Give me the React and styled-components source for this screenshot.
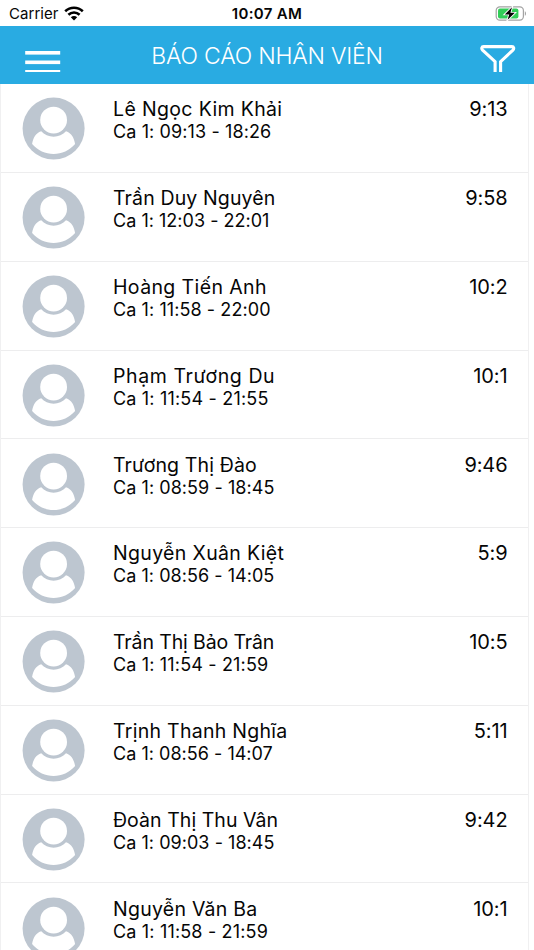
import React from "react";
import styled, { createGlobalStyle } from "styled-components";

const GlobalStyle = createGlobalStyle`
  * { box-sizing: border-box; }
  html, body { margin: 0; background: #fff; }
  body { font-family: Inter, "Liberation Sans", sans-serif; color: #060606; }
`;

const Screen = styled.div`
  width: 534px;
  height: 950px;
  overflow: hidden;
  display: flex;
  flex-direction: column;
`;

const StatusBar = styled.header`
  flex: none;
  height: 26px;
  padding: 1px 7px 0 9px;
  display: grid;
  grid-template-columns: 1fr auto 1fr;
  align-items: center;
  font-size: 15px;
  line-height: 24px;
`;

const Carrier = styled.div`
  display: flex;
  align-items: center;
  gap: 5px;
  letter-spacing: 0.05px;
`;

const WifiIcon = styled.svg`
  display: block;
  margin-bottom: 1px;
`;

const Clock = styled.div`
  font-weight: 600;
  letter-spacing: 0.35px;
  margin-right: 2px;
`;

const BatteryIcon = styled.svg`
  justify-self: end;
  display: block;
`;

const NavBar = styled.nav`
  flex: none;
  height: 58px;
  padding: 0 18px 0 25px;
  display: grid;
  grid-template-columns: 36px 1fr 36px;
  background: #29abe2;
  color: #fff;
`;

const Title = styled.h1`
  margin: 0;
  padding: 15px 7px 0 0;
  text-align: center;
  font-size: 23px;
  line-height: 30px;
  font-weight: 350;
  letter-spacing: -0.22px;
  white-space: nowrap;
`;

const NavIcon = styled.svg`
  display: block;
  margin-top: ${(p) => p.$top}px;
`;

const List = styled.ul`
  flex: none;
  width: 529px;
  margin: 0;
  padding: 0.3px 0 0;
  list-style: none;
  border: solid #f0f0f1;
  border-width: 0 1px;
`;

const Row = styled.li`
  height: 88.8px;
  padding: 13.1px 20.5px 0 21px;
  display: flex;
  border-bottom: 1px solid #ededee;
`;

const Avatar = styled.svg`
  flex: none;
  width: 63px;
  height: 63px;
  margin-right: 28px;
`;

const Details = styled.div`
  flex: 1;
  white-space: nowrap;
`;

const Name = styled.div`
  font-size: 19.5px;
  line-height: 24px;
  letter-spacing: ${(p) => p.$track}px;
`;

const Shift = styled.div`
  font-size: 18px;
  line-height: 21px;
  letter-spacing: ${(p) => p.$track}px;
`;

const Hours = styled.div`
  font-size: 20px;
  line-height: 24px;
  letter-spacing: -0.1px;
`;

const employees = [
  { name: "Lê Ngọc Kim Khải", from: "09:13", to: "18:26", hours: "9:13", nt: 0.35, st: 0.11 },
  { name: "Trần Duy Nguyên", from: "12:03", to: "22:01", hours: "9:58", nt: 0.13, st: 0.02 },
  { name: "Hoàng Tiến Anh", from: "11:58", to: "22:00", hours: "10:2", nt: 0.38, st: 0.08 },
  { name: "Phạm Trương Du", from: "11:54", to: "21:55", hours: "10:1", nt: 0.59, st: 0.18 },
  { name: "Trương Thị Đào", from: "08:59", to: "18:45", hours: "9:46", nt: 0.14, st: 0.06 },
  { name: "Nguyễn Xuân Kiệt", from: "08:56", to: "14:05", hours: "5:9", nt: 0.34, st: 0.04 },
  { name: "Trần Thị Bảo Trân", from: "11:54", to: "21:59", hours: "10:5", nt: -0.12, st: 0.16 },
  { name: "Trịnh Thanh Nghĩa", from: "08:56", to: "14:07", hours: "5:11", nt: 0.28, st: 0.02 },
  { name: "Đoàn Thị Thu Vân", from: "09:03", to: "18:45", hours: "9:42", nt: 0.05, st: 0.04 },
  { name: "Nguyễn Văn Ba", from: "11:58", to: "21:59", hours: "10:1", nt: 0.25, st: 0.17 },
];

function Wifi() {
  return (
    <WifiIcon width="20" height="15" viewBox="0 0 20 15" fill="none" stroke="#000" strokeWidth="2.6">
      <path d="M1.2 5.3C6.2 0.6 13.8 0.6 18.8 5.3" />
      <path d="M4.4 8.7C7.6 5.7 12.4 5.7 15.6 8.7" />
      <path d="M10 14.4L6.8 11.2C8.6 9.6 11.4 9.6 13.2 11.2Z" fill="#000" stroke="none" />
    </WifiIcon>
  );
}

function Battery() {
  return (
    <BatteryIcon width="32" height="16" viewBox="0 0 32 16">
      <rect x="1.2" y="0.8" width="27.2" height="13.4" rx="3.6" fill="#fff" stroke="#a3a3a3" strokeWidth="1.2" />
      <path d="M29.8 5.2C31.4 5.8 31.4 9.2 29.8 9.8Z" fill="#a3a3a3" />
      <rect x="3" y="2.6" width="20.4" height="9.8" rx="2" fill="#32cd58" />
      <path d="M17 1.3L9.8 8.4H14.2L12.6 13.8L19.8 6.8H15.4Z" fill="#000" stroke="#fff" strokeWidth="1.8" paintOrder="stroke" />
    </BatteryIcon>
  );
}

function Person() {
  return (
    <Avatar viewBox="-0.6 -0.6 63 63">
      <circle cx="31" cy="31" r="31" fill="#bdc6d0" />
      <circle cx="31" cy="22.5" r="13.4" fill="#fff" />
      <path d="M18.6 33.7C24.5 40.8 37.5 40.8 43.4 33.7C49 35.6 51.5 40.5 52.5 46.5C46.8 53.2 39.2 56.4 31 56.4C22.8 56.4 15.2 53.2 9.5 46.5C10.5 40.5 13 35.6 18.6 33.7Z" fill="#fff" />
    </Avatar>
  );
}

export default function App() {
  return (
    <>
      <GlobalStyle />
      <Screen>
        <StatusBar>
          <Carrier>
            Carrier
            <Wifi />
          </Carrier>
          <Clock>10:07 AM</Clock>
          <Battery />
        </StatusBar>
        <NavBar>
          <NavIcon $top={24} width="36" height="24" viewBox="0 0 36 24" fill="#fff">
            <rect x="0.2" y="1" width="35" height="3.6" />
            <rect x="0.2" y="10.5" width="35" height="3.6" />
            <rect x="0.2" y="20" width="35" height="2" />
          </NavIcon>
          <Title>BÁO CÁO NHÂN VIÊN</Title>
          <NavIcon $top={18} width="36" height="28" viewBox="0 0 36 28" fill="none" stroke="#fff" strokeWidth="3.1">
            <path d="M15.1 28V17.6L2.6 6.1C1.2 4.6 1.6 2.6 3.6 2.6H31.9C33.9 2.6 34.3 4.6 32.9 6.1L20.6 17.6V28" />
          </NavIcon>
        </NavBar>
        <List>
          {employees.map((e) => (
            <Row key={e.name}>
              <Person />
              <Details>
                <Name $track={e.nt}>{e.name}</Name>
                <Shift $track={e.st}>
                  Ca 1: {e.from} - {e.to}
                </Shift>
              </Details>
              <Hours>{e.hours}</Hours>
            </Row>
          ))}
        </List>
      </Screen>
    </>
  );
}
